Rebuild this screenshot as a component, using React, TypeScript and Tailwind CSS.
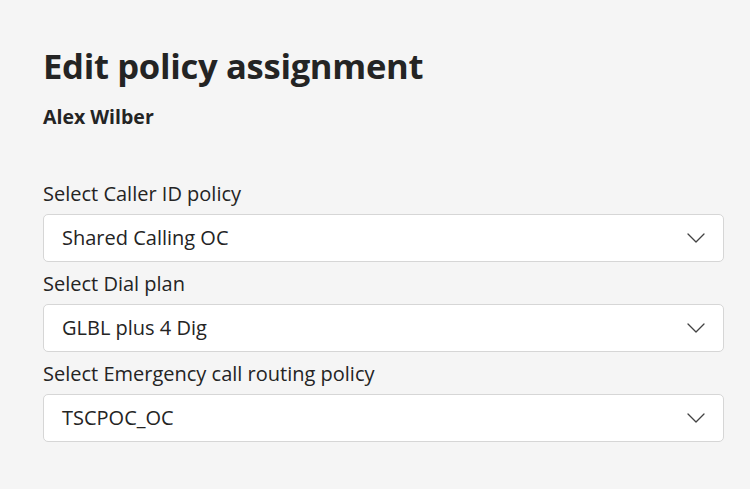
import React from "react";

function Chevron() {
  return (
    <svg width="18" height="10" viewBox="0 0 18 10" fill="none" className="shrink-0">
      <path d="M1 1L9 9L17 1" stroke="#424242" strokeWidth="1.3" strokeLinecap="round" strokeLinejoin="round" />
    </svg>
  );
}

function Field({ label, value }: { label: string; value: string }) {
  return (
    <div className="flex flex-col">
      <div className="h-[28px] flex items-center text-[20px] text-[#242424] mb-[6px]">{label}</div>
      <div className="h-[48px] bg-white border border-[#d6d6d6] rounded-[5px] flex items-center justify-between pl-[18px] pr-[18px]">
        <span className="text-[20px] text-[#242424]">{value}</span>
        <Chevron />
      </div>
    </div>
  );
}

export default function App() {
  return (
    <div
      className="w-[750px] h-[489px] bg-[#f5f5f5] pl-[43px] pr-[26px] pt-[40px]"
      style={{ fontFamily: '"Open Sans", "Noto Sans", sans-serif' }}
    >
      <h1 className="text-[34.6px] font-bold text-[#242424] leading-[52px] tracking-[-0.3px]">Edit policy assignment</h1>
      <div className="text-[19.5px] font-bold text-[#242424] mt-[12px] leading-[26px]">Alex Wilber</div>
      <div className="mt-[50px] flex flex-col gap-[8px]">
        <Field label="Select Caller ID policy" value="Shared Calling OC" />
        <Field label="Select Dial plan" value="GLBL plus 4 Dig" />
        <Field label="Select Emergency call routing policy" value="TSCPOC_OC" />
      </div>
    </div>
  );
}
